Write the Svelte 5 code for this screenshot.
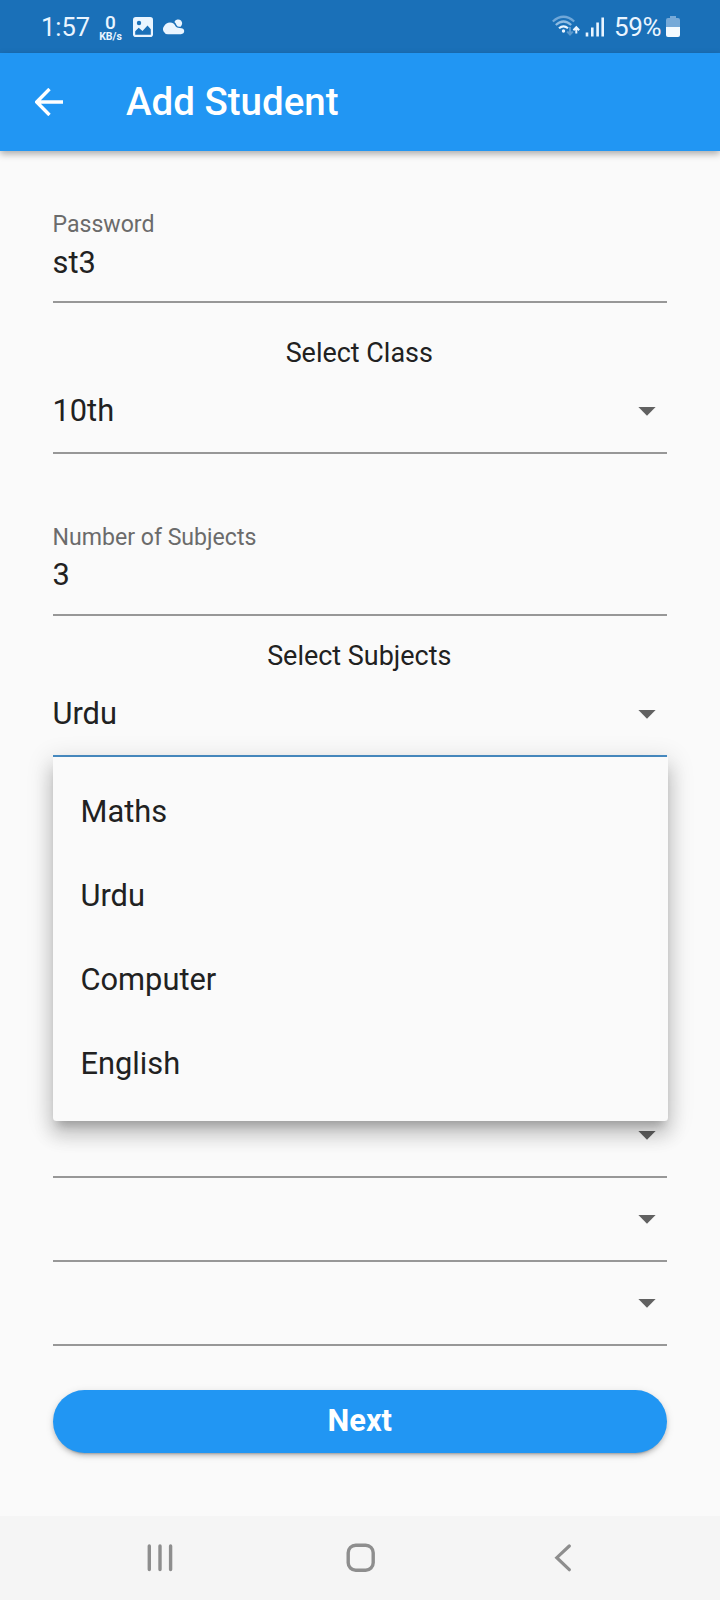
<script>
  const subjects = ['Maths', 'Urdu', 'Computer', 'English'];
</script>

{#snippet caret()}
  <svg class="caret" width="18" height="9" viewBox="0 0 18 9"><path d="M.4 0h17.2L9 8.7z" fill="#616161" /></svg>
{/snippet}

<div class="screen">
  <header class="status">
    <span class="clock">1:57</span>
    <span class="speed"><b>0</b><small>KB/s</small></span>
    <svg class="photo" width="20" height="20" viewBox="0 0 20 20">
      <rect width="20" height="20" rx="2.800" fill="#eaf5ff" />
      <circle cx="6" cy="6" r="2.200" fill="#1a70b8" />
      <path d="M2.200 14.200l3.500-3.400 3.800 3.200 5-5.400 3.300 3.600v5.500H2.200z" fill="#1a70b8" />
    </svg>
    <svg class="cloud" width="22" height="16" viewBox="0 0 22 16">
      <path fill="#eaf5ff" d="M5.400 15.200A5 5 0 0 1 1.200 7Q3 3.500 7 3.500q4.300 0 5.500 3.800 1 1.700 4 1.700 4.700.2 4.700 3.100t-3.300 3.100z" />
      <path fill="#eaf5ff" d="M11.400 3A4.200 4.200 0 0 1 18 1.500q2.500 3-.4 6.200-3 .6-4-1.500Q12.700 4 11.400 3z" />
    </svg>
    <span class="grow"></span>
    <svg class="wifi" width="28" height="22" viewBox="0 0 28 22">
      <g fill="none" stroke-width="2.200">
        <path d="M.8 6.500Q11.500-3 22.200 6.500" stroke="#6fa7d8" />
        <path d="M3.800 10Q11.500 3 19.200 10" stroke="#8fbce3" />
        <path d="M7 13.300q4.500-4 9 0" stroke="#eaf5ff" />
        <path d="M18 12v7M15.200 16.500l2.800 3 2.800-3" stroke="#5b99ce" stroke-width="2" />
        <path d="M24.300 18.500v-6M21.400 15.200l2.900-3 2.900 3" stroke="#eaf5ff" stroke-width="2" />
      </g>
      <circle cx="11.500" cy="16" r="1.700" fill="#eaf5ff" />
    </svg>
    <svg class="signal" width="20" height="20" viewBox="0 0 20 20">
      <path d="M2 15.500v4M7.300 10.500v9M12.600 5.500v14M17.700.5v19" stroke="#eaf5ff" stroke-width="2.600" />
    </svg>
    <span class="percent">59%</span>
    <svg class="battery" width="14" height="22" viewBox="0 0 14 22">
      <path d="M4 0h6v2h2q2 0 2 2v7H0V4q0-2 2-2h2z" fill="#76a9d8" />
      <path d="M0 11h14v8q0 2-2 2H2q-2 0-2-2z" fill="#f4faff" />
    </svg>
  </header>

  <div class="appbar">
    <svg width="28" height="28" viewBox="0 0 28 28"><path d="M28 14H2M14.500 1L1.700 14l12.800 13" fill="none" stroke="#fff" stroke-width="3.400" /></svg>
    <h1>Add Student</h1>
  </div>

  <main>
    <div class="field">
      <span class="label">Password</span>
      <span class="value">st3</span>
    </div>
    <h2>Select Class</h2>
    <div class="select"><span>10th</span>{@render caret()}</div>
    <div class="field second">
      <span class="label">Number of Subjects</span>
      <span class="value">3</span>
    </div>
    <h2 class="tight">Select Subjects</h2>
    <div class="select open">
      <span>Urdu</span>{@render caret()}
      <ul class="menu">
        {#each subjects as subject}
          <li>{subject}</li>
        {/each}
      </ul>
    </div>
    <div class="rest">
      {#each [1, 2, 3] as _}
        <div class="select"><span></span>{@render caret()}</div>
      {/each}
    </div>
    <button>Next</button>
  </main>

  <nav>
    <svg width="26" height="28" viewBox="0 0 26 28"><path d="M2.300 2v23.500M13 2v23.500M23.600 2v23.500" stroke="#8e8e8e" stroke-width="3.400" stroke-linecap="round" /></svg>
    <svg class="home" width="30" height="30" viewBox="0 0 30 30"><rect x="2.200" y="2.200" width="25" height="25" rx="7.500" fill="none" stroke="#8e8e8e" stroke-width="3.400" /></svg>
    <svg width="18" height="28" viewBox="0 0 18 28"><path d="M15.300 2L2.800 13.700l12.500 12" fill="none" stroke="#8e8e8e" stroke-width="3.200" stroke-linecap="round" /></svg>
  </nav>
</div>

<style>
  :global(body) { margin: 0; background: #fafafa; }
  .screen {
    width: 720px; height: 1600px; display: flex; flex-direction: column;
    background: #fafafa; color: #212121; font-family: Roboto, sans-serif;
    font-size: 30.8px; overflow: hidden;
  }
  svg { display: block; flex: none; }
  .grow { flex: 1; }
  .status {
    height: 53px; flex: none; box-sizing: border-box; padding: 0 40px 0 41px;
    display: flex; align-items: flex-start; background: #1a70b8; color: #eaf5ff;
  }
  .clock { width: 57px; font-size: 25.500px; line-height: 34px; margin-top: 10px; }
  .speed { width: 25px; display: flex; flex-direction: column; align-items: center; margin-top: 13px; }
  .speed b { font-size: 19px; line-height: 19px; font-weight: 500; }
  .speed small { font-size: 10.500px; line-height: 9px; font-weight: 700; }
  .photo { margin: 17px 0 0 10px; }
  .cloud { margin: 19px 0 0 10px; }
  .wifi { margin: 15px 5px 0 0; }
  .signal { margin-top: 17px; }
  .percent { margin: 10px 5px 0 9px; font-size: 26px; line-height: 34px; width: 47px; letter-spacing: -.4px; }
  .battery { margin-top: 16px; }
  .appbar {
    height: 98px; flex: none; box-sizing: border-box; padding-left: 35px;
    display: flex; align-items: center; gap: 63px; background: #2196f3; color: #fff;
    position: relative; box-shadow: 0 3px 7px rgba(0, 0, 0, .32);
  }
  h1 { margin: 0; font-size: 38.500px; font-weight: 500; line-height: 44px; }
  main { flex: 1; padding: 59px 53px 0 52.500px; display: flex; flex-direction: column; }
  .field {
    height: 93px; box-sizing: border-box; border-bottom: 2px solid #979797; padding-top: 1px;
    display: flex; flex-direction: column; gap: 6px; flex: none;
  }
  .second { margin-top: 69px; }
  .second .value { margin-top: -1px; }
  .label { font-size: 23.100px; line-height: 28px; color: #6b6b6b; }
  .value { line-height: 36px; }
  h2 {
    margin: 34px 0 1px; font-size: 26.950px; font-weight: 400; line-height: 32px;
    text-align: center; padding-right: 1px;
  }
  h2.tight { margin: 24px 0 1px; }
  .select {
    height: 84px; flex: none; box-sizing: border-box; border-bottom: 2px solid #979797;
    padding-right: 11.500px; display: flex; align-items: center; justify-content: space-between;
    position: relative;
  }
  .select > span { padding-bottom: 2px; }
  .open { border-color: #4a90c8; }
  .menu {
    position: absolute; left: 0; right: -.5px; top: 84px; z-index: 2; margin: 0; box-sizing: border-box;
    height: 364px; padding: 13px 0 0 28px; list-style: none; background: #fafafa;
    border-radius: 0 0 3.500px 3.500px;
    box-shadow: 0 9px 9px -5px rgba(0, 0, 0, .2), 0 14px 18px 2px rgba(0, 0, 0, .14), 0 5px 25px 4px rgba(0, 0, 0, .12);
  }
  .menu li { height: 84px; line-height: 84px; }
  .rest { margin-top: 337px; }
  button {
    height: 63px; margin-top: 44px; padding: 0 0 2px; border: 0; border-radius: 32px;
    background: #2196f3; color: #fff; font: 700 30.800px/60px Roboto, sans-serif; flex: none;
    box-shadow: 0 5px 2px -4px rgba(0, 0, 0, .2), 0 3px 4px rgba(0, 0, 0, .14), 0 2px 9px rgba(0, 0, 0, .12);
  }
  nav {
    height: 84px; flex: none; box-sizing: border-box; padding: 0 148px 0 147px;
    display: flex; align-items: center; justify-content: space-between; background: #f5f5f5;
  }
  .home { margin: 0 5px 0 0; }
</style>
